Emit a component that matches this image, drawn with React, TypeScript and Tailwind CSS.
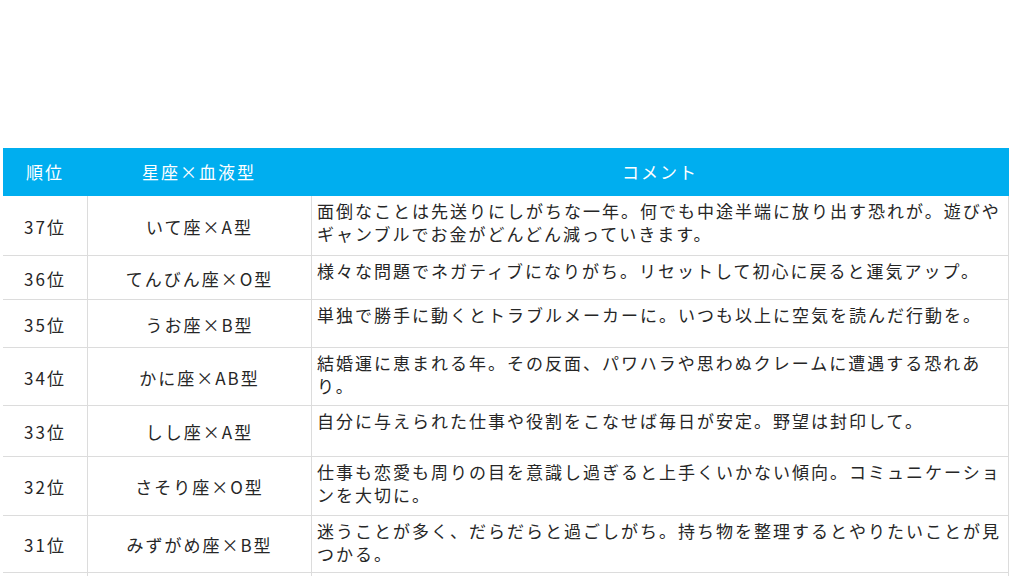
import React from "react";

type Row = { rank: string; sign: string; lines: string[]; h: string };

const rows: Row[] = [
  { rank: "37位", sign: "いて座×A型", lines: ["面倒なことは先送りにしがちな一年。何でも中途半端に放り出す恐れが。遊びや", "ギャンブルでお金がどんどん減っていきます。"], h: "h-[60px]" },
  { rank: "36位", sign: "てんびん座×O型", lines: ["様々な問題でネガティブになりがち。リセットして初心に戻ると運気アップ。"], h: "h-[44px]" },
  { rank: "35位", sign: "うお座×B型", lines: ["単独で勝手に動くとトラブルメーカーに。いつも以上に空気を読んだ行動を。"], h: "h-[48px]" },
  { rank: "34位", sign: "かに座×AB型", lines: ["結婚運に恵まれる年。その反面、パワハラや思わぬクレームに遭遇する恐れあ", "り。"], h: "h-[58px]" },
  { rank: "33位", sign: "しし座×A型", lines: ["自分に与えられた仕事や役割をこなせば毎日が安定。野望は封印して。"], h: "h-[51px]" },
  { rank: "32位", sign: "さそり座×O型", lines: ["仕事も恋愛も周りの目を意識し過ぎると上手くいかない傾向。コミュニケーショ", "ンを大切に。"], h: "h-[59px]" },
  { rank: "31位", sign: "みずがめ座×B型", lines: ["迷うことが多く、だらだらと過ごしがち。持ち物を整理するとやりたいことが見", "つかる。"], h: "h-[57px]" },
];

export default function App() {
  return (
    <div
      className="w-[1024px] h-[576px] overflow-hidden bg-white text-[#262626]"
      style={{ fontFamily: '"Noto Sans CJK JP", "Noto Sans", sans-serif' }}
    >
      <div className="h-[148px]" />
      <div className="ml-[3px] w-[1006px] flex flex-col">
        <div className="grid grid-cols-[84px_224px_698px] h-[48px] bg-[#00aeef] text-white text-[17px] tracking-[2px]">
          <div className="flex items-center justify-center">順位</div>
          <div className="flex items-center justify-center">星座×血液型</div>
          <div className="flex items-center justify-center">コメント</div>
        </div>
        {rows.map((r) => (
          <div
            key={r.rank}
            className={`grid grid-cols-[84px_224px_698px] ${r.h} border-b border-[#dcdcdc] text-[17px] tracking-[2px]`}
          >
            <div className="flex items-center justify-center pt-[2px]">{r.rank}</div>
            <div className="flex items-center justify-center border-l border-[#dcdcdc] pt-[2px]">{r.sign}</div>
            <div className="border-l border-r border-[#dcdcdc] pl-[5px] pt-[3px] leading-[23px] whitespace-nowrap">
              {r.lines.map((l, i) => (
                <div key={i}>{l}</div>
              ))}
            </div>
          </div>
        ))}
        <div className="grid grid-cols-[84px_224px_698px] h-[40px]">
          <div />
          <div className="border-l border-[#dcdcdc]" />
          <div className="border-l border-r border-[#dcdcdc]" />
        </div>
      </div>
    </div>
  );
}
